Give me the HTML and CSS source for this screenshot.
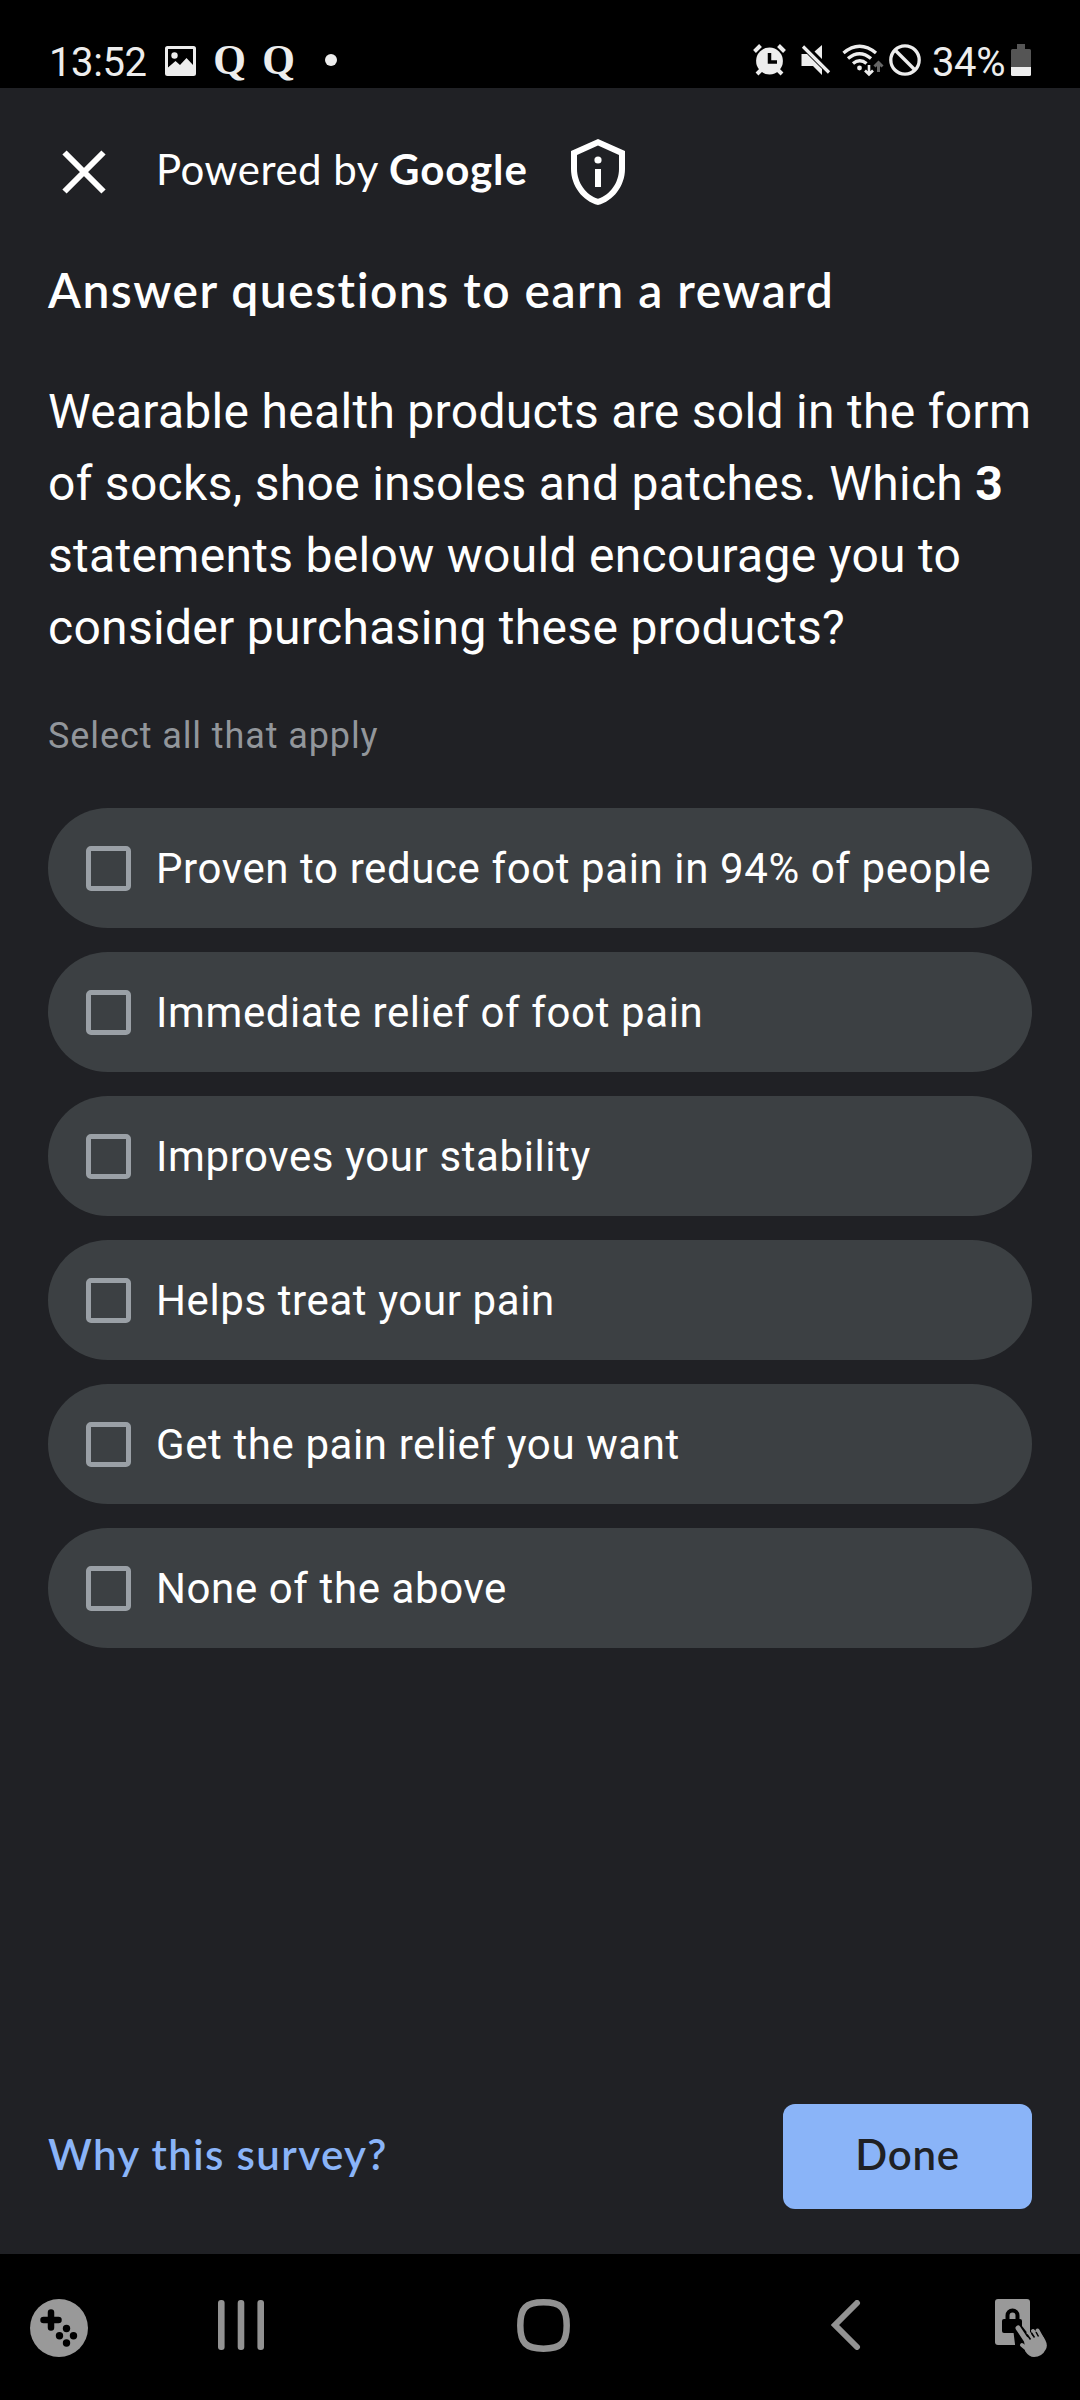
FILE: index.html
```html
<!DOCTYPE html>
<html lang="en">
<head>
<meta charset="utf-8">
<title>Survey</title>
<link rel="stylesheet" href="styles.css">
</head>
<body>
<div class="screen">
  <header class="status">
    <div class="status-left">
      <span class="clock">13:52</span>
      <svg class="ic-photo" width="31" height="30" viewBox="0 0 31 30"><path fill="#ededed" fill-rule="evenodd" d="M2.500 0h26a2.500 2.500 0 0 1 2.500 2.500v25a2.500 2.500 0 0 1-2.500 2.500h-26a2.500 2.500 0 0 1-2.500-2.500v-25A2.500 2.500 0 0 1 2.500 0zM3 3v18.500l7.500-6.500 4.500 4 6.500-7 6.500 7V3z"/><circle cx="9.500" cy="9.500" r="3.200" fill="#ededed"/></svg>
      <span class="quora">Q</span>
      <span class="quora">Q</span>
      <span class="dot"></span>
    </div>
    <div class="status-right">
      <svg class="ic-alarm" width="33" height="32" viewBox="0 0 33 32"><circle cx="16.500" cy="17" r="13.400" fill="#ededed"/><path d="M1.500 7.500l6-6M31.500 7.500l-6-6M8 26l-4 4M25 26l4 4" stroke="#ededed" stroke-width="4" fill="none"/><path d="M16.500 9v9h7.500" stroke="#000" stroke-width="3.500" fill="none"/></svg>
      <svg class="ic-mute" width="30" height="32" viewBox="0 0 30 32"><path fill="#ededed" d="M0.500 10h5.500l15 15v6l-9-9H0.500zM21 1v14l-7.500-7.500z"/><path d="M2 2.500l26 26" stroke="#ededed" stroke-width="3.200"/></svg>
      <svg class="ic-wifi" width="42" height="34" viewBox="0 0 42 34"><g fill="none" stroke="#ededed" stroke-width="3.400"><path d="M1.500 9q16-13.500 32.500 0M6 14.500q11.500-9.500 23 0M11 19.500q6.800-5.500 13.500 0"/><path d="M27 21v9M23 26.500l4 4 4-4" stroke-width="2.600"/></g><circle cx="17.500" cy="24" r="2.400" fill="#ededed"/><path d="M36.500 28v-9M32.500 22.500l4-4 4 4" fill="none" stroke="#666" stroke-width="3"/></svg>
      <svg class="ic-block" width="32" height="32" viewBox="0 0 32 32"><g fill="none" stroke="#ededed" stroke-width="3.300"><circle cx="16" cy="16" r="14.200"/><path d="M6 6l20 20"/></g></svg>
      <span class="percent">34%</span>
      <svg class="ic-battery" width="20" height="32" viewBox="0 0 20 32"><path fill="#555" d="M6 0h8v5h4.500a1.500 1.500 0 0 1 1.500 1.500V23H0V6.500A1.500 1.500 0 0 1 1.500 5H6z"/><path fill="#ededed" d="M0 23h20v7.500a1.500 1.500 0 0 1-1.500 1.500h-17A1.500 1.500 0 0 1 0 30.500z"/></svg>
    </div>
  </header>
  <main class="survey">
    <div class="brand">
      <svg class="close" width="44" height="44" viewBox="0 0 44 44"><path d="M2.500 2.500l39 39M41.500 2.500l-39 39" stroke="#fff" stroke-width="6"/></svg>
      <span class="powered">Powered by</span><span class="google">Google</span>
      <svg class="shield" width="72" height="72" viewBox="0 0 24 24"><path fill="#fff" d="M12 1 3 5v6c0 5.550 3.840 10.740 9 12 5.160-1.260 9-6.450 9-12V5l-9-4zm0 2.180 7 3.120V11c0 4.520-2.980 8.690-7 9.930C7.980 19.690 5 15.520 5 11V6.300l7-3.120zM11 11h2v6h-2z"/><circle cx="12" cy="8" r="1.200" fill="#fff"/></svg>
    </div>
    <h1 class="title">Answer questions to earn a reward</h1>
    <p class="question">Wearable health products are sold in the form<br>of socks, shoe insoles and patches. Which <b>3</b><br>statements below would encourage you to<br>consider purchasing these products?</p>
    <p class="hint">Select all that apply</p>
    <ul class="options">
      <li class="option"><span class="box"></span><span>Proven to reduce foot pain in 94% of people</span></li>
      <li class="option"><span class="box"></span><span>Immediate relief of foot pain</span></li>
      <li class="option"><span class="box"></span><span>Improves your stability</span></li>
      <li class="option"><span class="box"></span><span>Helps treat your pain</span></li>
      <li class="option"><span class="box"></span><span>Get the pain relief you want</span></li>
      <li class="option"><span class="box"></span><span>None of the above</span></li>
    </ul>
    <footer class="actions">
      <a class="why">Why this survey?</a>
      <button class="done">Done</button>
    </footer>
  </main>
  <nav class="navbar">
    <svg class="nav-game" width="58" height="58" viewBox="0 0 58 58"><circle cx="29" cy="29" r="29" fill="#999"/><path d="M21 13.500v15M13.500 21h15" stroke="#000" stroke-width="6.500" stroke-linecap="round"/><g><circle cx="36.500" cy="29.500" r="3.700"/><circle cx="36.500" cy="44" r="3.700"/><circle cx="29.500" cy="36.700" r="3.700"/><circle cx="43.500" cy="36.700" r="3.700"/></g></svg>
    <svg class="nav-recents" width="46" height="50" viewBox="0 0 46 50"><g fill="#929292"><rect width="6.600" height="50" rx="3"/><rect x="19.700" width="6.600" height="50" rx="3"/><rect x="39.400" width="6.600" height="50" rx="3"/></g></svg>
    <svg class="nav-home" width="53" height="53" viewBox="0 0 53 53"><path d="M26.500 3.300C44 3.300 49.700 9 49.700 26.500S44 49.700 26.500 49.700 3.300 44 3.300 26.500 9 3.300 26.500 3.300z" fill="none" stroke="#929292" stroke-width="6.500"/></svg>
    <svg class="nav-back" width="30" height="50" viewBox="0 0 30 50"><path d="M26 3L4 25l22 22" fill="none" stroke="#929292" stroke-width="6" stroke-linecap="round"/></svg>
    <svg class="nav-lock" width="52" height="58" viewBox="0 0 52 58">
      <rect width="35" height="46" rx="3" fill="#999"/>
      <rect x="7" y="20" width="20" height="14" rx="2"/>
      <path d="M12.500 21v-4.500a5 5 0 0 1 10 0V21" fill="none" stroke="#000" stroke-width="4"/>
      <path d="M20 29q3-5 6 0l14 18-6 6-12-8z" stroke="#000" stroke-width="4"/>
      <g fill="none" stroke="#999" stroke-linecap="round"><path d="M23 29l10 15" stroke-width="5"/><path d="M33.500 34l5 8M38 32l5 8M42.500 31.500l5 9" stroke-width="4"/><path d="M27 46l6 5" stroke-width="4"/></g>
      <path d="M29 39l17-4q8 9 5 15-4 8-12 8-5 0-9-6z" fill="#999"/>
      <path d="M32 35.500l3.500 5M36.500 34l3 4.500M41 33l2.500 4.500" stroke="#000" stroke-width="1.500"/>
    </svg>
  </nav>
</div>
</body>
</html>
```
FILE: styles.css
```css
* { box-sizing: border-box; }
body { margin: 0; background: #000; font-family: Roboto, "Noto Sans", sans-serif; }
svg { display: block; flex: none; }
.screen { width: 1080px; height: 2400px; display: flex; flex-direction: column; overflow: hidden; }

.status { height: 88px; display: flex; justify-content: space-between; padding: 44px 49px 0; color: #ededed; }
.status-left, .status-right { display: flex; align-items: flex-start; white-space: nowrap; }
.clock, .percent { font-size: 40px; line-height: 40px; margin-top: -1px; letter-spacing: -0.4px; }
.clock { width: 116px; }
.ic-photo { margin-top: 2px; }
.quora { font: bold 42px/40px "Liberation Serif", serif; width: 49px; text-align: center; margin-top: -4px; }
.ic-photo + .quora { margin-left: 9px; }
.dot { width: 12px; height: 12px; border-radius: 50%; background: #ededed; margin: 10px 0 0 22px; }
.ic-mute { margin-left: 15px; }
.ic-wifi { margin-left: 11px; }
.ic-block { margin-left: 5px; }
.percent { margin-left: 11px; width: 79px; }
.survey { flex: 1; background: #202125; padding: 48px 48px 45px; display: flex; flex-direction: column; color: #fff; }

.brand { display: flex; align-items: center; height: 72px; font-family: Lato, "Open Sans", sans-serif; font-size: 42px; line-height: 48px; white-space: nowrap; }
.close { margin-left: 14px; margin-right: 50px; }
.powered { width: 233px; padding-bottom: 6px; letter-spacing: 0.5px; }
.google { width: 138px; padding-bottom: 6px; font-weight: 700; letter-spacing: 0.9px; }
.shield { margin-left: 35px; }
.title { margin: 46px 0 0; font: 600 48px/72px Lato, "Open Sans", sans-serif; letter-spacing: 1.5px; white-space: nowrap; }
.question { margin: 50px 0 0; font-size: 48px; line-height: 72px; letter-spacing: 0.3px; white-space: nowrap; }
.hint { margin: 45px 0 0; font-size: 36px; line-height: 54px; letter-spacing: 0.9px; color: #92969b; }
.options { list-style: none; margin: 45px 0 0; padding: 0; display: grid; gap: 24px; }
.option { height: 120px; border-radius: 60px; background: #3c4043; display: flex; align-items: center; gap: 25px; padding-left: 38px; font-size: 42px; letter-spacing: 0.6px; white-space: nowrap; }
.box { width: 45px; height: 45px; border: 5px solid #9aa0a6; border-radius: 5px; }
.actions { margin-top: auto; display: flex; align-items: center; justify-content: space-between; font-family: Lato, "Open Sans", sans-serif; }
.why { font-size: 42px; font-weight: 600; color: #8ab4f8; letter-spacing: 1.4px; padding-bottom: 6px; }
.done { width: 249px; height: 105px; border: 0; border-radius: 12px; background: #8ab4f8; color: #202124; font: 600 42px Lato, "Open Sans", sans-serif; letter-spacing: 0.7px; padding: 0 0 6px; }

.navbar { height: 146px; display: flex; align-items: flex-start; padding: 45px 33px 0 30px; }
.nav-recents { margin: 1px 0 0 130px; }
.nav-home { margin: 0 0 0 253px; }
.nav-back { margin: 1px 0 0 261px; }
.nav-lock { margin-left: auto; }
```
